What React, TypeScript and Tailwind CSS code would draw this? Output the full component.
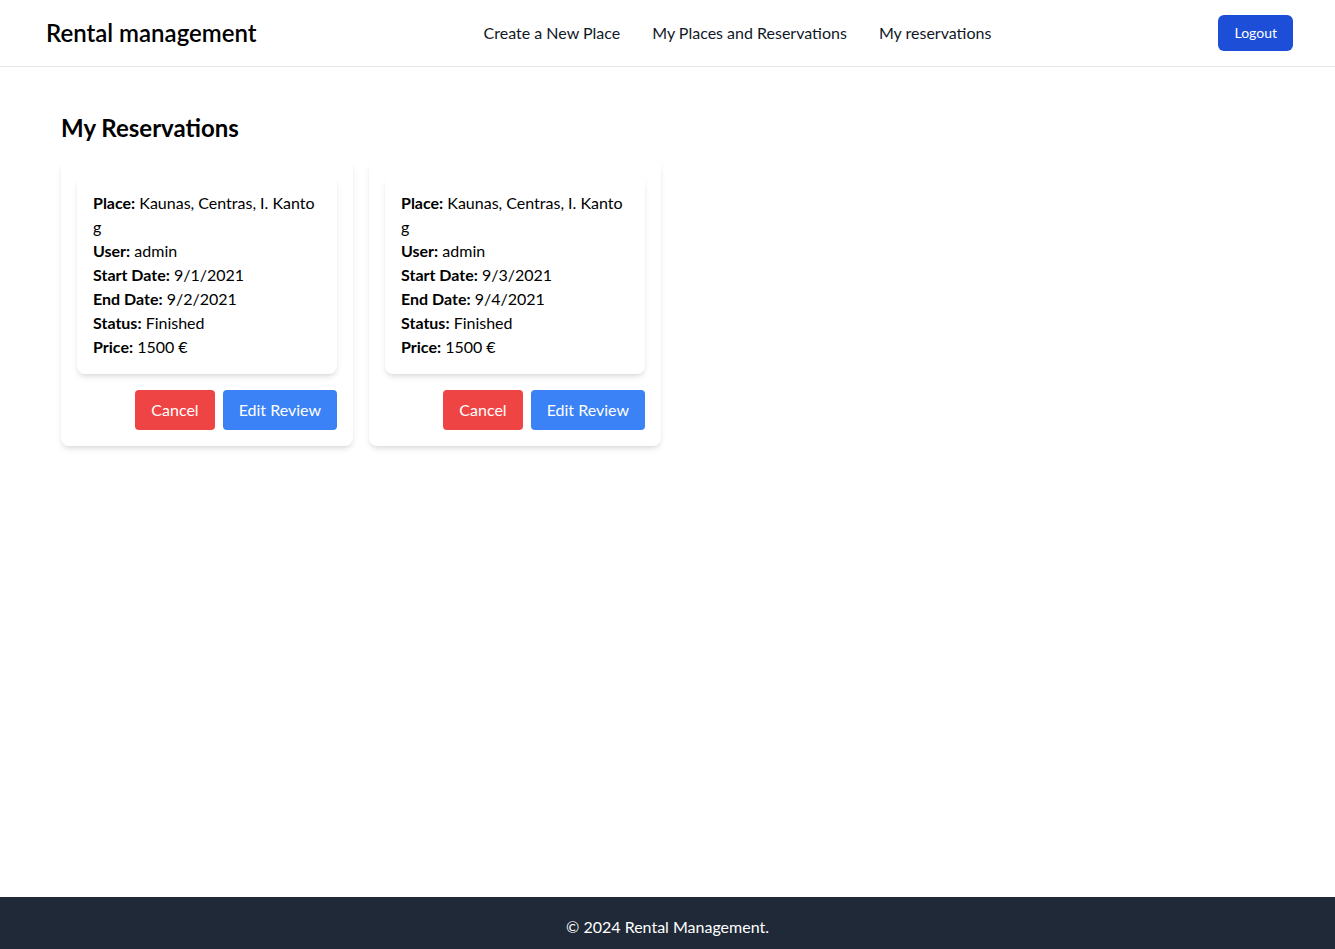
const reservations = [
  { id: 1, place: "Kaunas, Centras, I. Kanto g", user: "admin", start: "9/1/2021", end: "9/2/2021", status: "Finished", price: "1500 €" },
  { id: 2, place: "Kaunas, Centras, I. Kanto g", user: "admin", start: "9/3/2021", end: "9/4/2021", status: "Finished", price: "1500 €" },
];

function Row({ label, value }: { label: string; value: string }) {
  return (
    <p className="leading-6">
      <span className="font-bold">{label}:</span> {value}
    </p>
  );
}

export default function App() {
  return (
    <div className="min-h-screen flex flex-col bg-white text-black" style={{ fontFamily: "Lato, 'Noto Sans', sans-serif" }}>
      {/* Header */}
      <header className="h-[67px] border-b border-[#e5e7eb] flex items-center justify-between px-[42px]">
        <h1 className="text-2xl font-semibold pl-1">Rental management</h1>
        <nav className="flex gap-8 text-base text-[#111827]">
          <a href="#">Create a New Place</a>
          <a href="#">My Places and Reservations</a>
          <a href="#">My reservations</a>
        </nav>
        <button className="bg-[#1d4ed8] text-white text-sm px-4 h-9 rounded-md">Logout</button>
      </header>

      {/* Main */}
      <main className="flex-1 px-[61px] pt-[45px]">
        <h2 className="text-2xl font-bold leading-8 mb-4">My Reservations</h2>
        <div className="flex gap-4 items-start">
          {reservations.map((r) => (
            <div key={r.id} className="w-[292px] bg-white rounded-lg shadow-md p-4">
              <div className="bg-white rounded-lg shadow-md px-4 py-[15px]">
                <Row label="Place" value={r.place} />
                <Row label="User" value={r.user} />
                <Row label="Start Date" value={r.start} />
                <Row label="End Date" value={r.end} />
                <Row label="Status" value={r.status} />
                <Row label="Price" value={r.price} />
              </div>
              <div className="flex justify-end gap-2 mt-4">
                <button className="bg-[#ef4444] text-white px-4 h-10 rounded">Cancel</button>
                <button className="bg-[#3b82f6] text-white px-4 h-10 rounded">Edit Review</button>
              </div>
            </div>
          ))}
        </div>
      </main>

      {/* Footer */}
      <footer className="bg-[#1f2937] text-white text-center h-[52px] pt-[18px] leading-6">
        © 2024 Rental Management.
      </footer>
    </div>
  );
}
